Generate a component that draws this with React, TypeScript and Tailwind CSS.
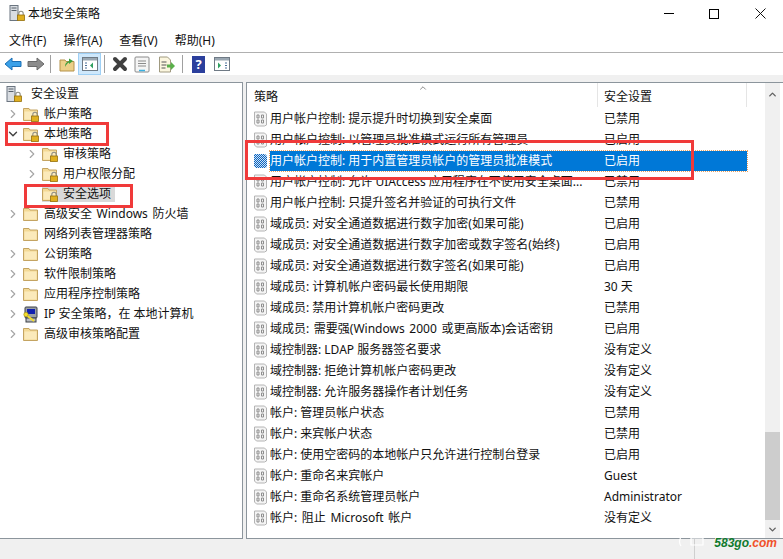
import { ChevronRight, ChevronDown, ChevronUp } from 'lucide-react'

const font = { fontFamily: '"Noto Sans", "Noto Sans CJK SC", sans-serif' }

interface Policy {
  name: string
  value: string
}

const policies: Policy[] = [
  { name: '用户帐户控制: 提示提升时切换到安全桌面', value: '已禁用' },
  { name: '用户帐户控制: 以管理员批准模式运行所有管理员', value: '已启用' },
  { name: '用户帐户控制: 用于内置管理员帐户的管理员批准模式', value: '已启用' },
  { name: '用户帐户控制: 允许 UIAccess 应用程序在不使用安全桌面...', value: '已禁用' },
  { name: '用户帐户控制: 只提升签名并验证的可执行文件', value: '已禁用' },
  { name: '域成员: 对安全通道数据进行数字加密(如果可能)', value: '已启用' },
  { name: '域成员: 对安全通道数据进行数字加密或数字签名(始终)', value: '已启用' },
  { name: '域成员: 对安全通道数据进行数字签名(如果可能)', value: '已启用' },
  { name: '域成员: 计算机帐户密码最长使用期限', value: '30 天' },
  { name: '域成员: 禁用计算机帐户密码更改', value: '已禁用' },
  { name: '域成员: 需要强(Windows 2000 或更高版本)会话密钥', value: '已启用' },
  { name: '域控制器: LDAP 服务器签名要求', value: '没有定义' },
  { name: '域控制器: 拒绝计算机帐户密码更改', value: '没有定义' },
  { name: '域控制器: 允许服务器操作者计划任务', value: '没有定义' },
  { name: '帐户: 管理员帐户状态', value: '已禁用' },
  { name: '帐户: 来宾帐户状态', value: '已禁用' },
  { name: '帐户: 使用空密码的本地帐户只允许进行控制台登录', value: '已启用' },
  { name: '帐户: 重命名来宾帐户', value: 'Guest' },
  { name: '帐户: 重命名系统管理员帐户', value: 'Administrator' },
  { name: '帐户: 阻止 Microsoft 帐户', value: '没有定义' },
]

// Windows / Microsoft lines run a bit wider in the screenshot
const isWide = (s: string) => /Windows|Microsoft/.test(s)

function Lock() {
  return (
    <g>
      <path d="M9.800 10V8.500a2.200 2.200 0 0 1 4.400 0V10" fill="none" stroke="#8f8f85" strokeWidth="1.100" />
      <rect x="8.500" y="10" width="7" height="5.500" fill="#e0b020" stroke="#96700c" strokeWidth="0.800" />
    </g>
  )
}

function Folder({ lock }: { lock?: boolean }) {
  return (
    <svg width="16" height="16" viewBox="0 0 16 16" className="shrink-0">
      <path d="M0.500 2.500h5.500l1 1.500h7.500v10.500h-14z" fill="#f3d996" stroke="#c4a462" />
      <path d="M1.500 5.500h12v8h-12z" fill="#fbeabb" />
      {lock && <Lock />}
    </svg>
  )
}

function ServerLock() {
  return (
    <svg width="16" height="17" viewBox="0 0 16 17" className="shrink-0">
      <rect x="1" y="0.500" width="8" height="15" fill="#d9dde2" stroke="#6b7580" />
      <path d="M2.500 3h5M2.500 5.500h5" stroke="#56606a" />
      <Lock />
    </svg>
  )
}

function IpIcon() {
  return (
    <svg width="16" height="17" viewBox="0 0 16 17" className="shrink-0">
      <rect x="2" y="1" width="12" height="11" rx="1" fill="#9aa0a6" stroke="#3c4046" />
      <rect x="4" y="3" width="8" height="5" fill="#1020b0" />
      <rect x="3" y="12" width="10" height="4" fill="#b7bbc0" stroke="#3c4046" />
      <path d="M2 8l9 7" stroke="#f2dc2e" strokeWidth="2" />
      <circle cx="3" cy="8.500" r="2.200" fill="#f2dc2e" stroke="#a08c10" strokeWidth="0.600" />
    </svg>
  )
}

function PolicyIcon({ selected }: { selected?: boolean }) {
  if (selected) {
    return (
      <svg width="13" height="16" viewBox="0 0 13 16" className="shrink-0">
        <defs>
          <pattern id="dither" width="2" height="2" patternUnits="userSpaceOnUse">
            <rect width="2" height="2" fill="#cfe2f5" />
            <rect width="1" height="1" fill="#0a64c0" />
            <rect x="1" y="1" width="1" height="1" fill="#0a64c0" />
          </pattern>
        </defs>
        <path d="M0 1h11l2 2v11l-2 1H2l-2-2z" fill="url(#dither)" />
      </svg>
    )
  }
  return (
    <svg width="13" height="16" viewBox="0 0 13 16" className="shrink-0">
      <path d="M0.500 1h10l2 2v11l-2 1h-8l-2-2z" fill="#f4f4f4" stroke="#b4b4b4" />
      <path d="M3 4h2v3H3zM7.500 4h2v3h-2zM3 9h2v3H3zM7.500 9h2v3h-2z" fill="none" stroke="#8e8e8e" />
    </svg>
  )
}

function TreeRow({ label, level = 0, arrow, icon, selected }: { label: string; level?: 0 | 1; arrow?: 'right' | 'down'; icon: React.ReactNode; selected?: boolean }) {
  return (
    <div className={`flex h-5 items-center ${level === 1 ? 'pl-[25px]' : 'pl-[6px]'}`}>
      <span className="flex w-[17px] shrink-0 items-center justify-start">
        {arrow === 'right' && <ChevronRight size={14} strokeWidth={2} className="text-[#a6a6a6]" />}
        {arrow === 'down' && <ChevronDown size={14} strokeWidth={2.4} className="text-[#404040]" />}
      </span>
      <span className={`flex h-[16px] items-center ${selected ? 'bg-[#d9d9d9] pr-[4px]' : ''}`}>
        {icon}
        <span className={`ml-[5px] whitespace-nowrap ${isWide(label) ? '[word-spacing:1.500px]' : ''}`}>{label}</span>
      </span>
    </div>
  )
}

function Toolbar() {
  return (
    <div className="flex h-[23px] items-center border-t border-[#b0b0b0] bg-white pl-1">
      <svg width="18" height="16" viewBox="0 0 18 16">
        <path d="M1 8l7-6v3.500h9v5H8V14z" fill="#3aa0e8" stroke="#1a6fb5" />
      </svg>
      <svg width="18" height="16" viewBox="0 0 18 16" className="ml-[5px]">
        <path d="M17 8l-7-6v3.500H1v5h9V14z" fill="#8c8c8c" stroke="#6a6a6a" />
      </svg>
      <div className="ml-[5px] h-[18px] w-px bg-[#a0a0a0]" />
      <svg width="16" height="16" viewBox="0 0 16 16" className="ml-[8px]">
        <path d="M1 4h5l1 1.500h8V15H1z" fill="#ecd089" stroke="#b5924a" />
        <path d="M6 11c0-4 2-5 4-6V2.500L14 5l-4 3V6.500C8 7.500 7 9 6 11z" fill="#3e9f3e" />
      </svg>
      <div className="ml-[3px] flex h-[22px] w-[23px] items-center justify-center border border-[#9fd0f5] bg-[#cfe8fb]">
        <svg width="16" height="14" viewBox="0 0 16 14">
          <rect x="0.500" y="0.500" width="15" height="13" fill="#fff" stroke="#6f7a85" />
          <rect x="1" y="1" width="14" height="2.500" fill="#9aa7b2" />
          <path d="M3 6h2M3 8.500h2M3 11h2" stroke="#4a6f98" />
          <path d="M11 5.500v6L8 8.500z" fill="#2ea060" />
        </svg>
      </div>
      <div className="ml-[3px] h-[18px] w-px bg-[#a0a0a0]" />
      <svg width="16" height="16" viewBox="0 0 16 16" className="ml-[7px]">
        <path d="M3 3l10 10M13 3L3 13" stroke="#3f3f3f" strokeWidth="4" strokeLinecap="round" />
      </svg>
      <svg width="16" height="17" viewBox="0 0 16 17" className="ml-[6px]">
        <rect x="1" y="1" width="14" height="15" rx="1" fill="#f5f5f5" stroke="#8a8a8a" />
        <path d="M4 5h8M4 7.500h8M4 10h8" stroke="#8a8a8a" />
        <path d="M5 14.500h6" stroke="#3ab0e0" strokeWidth="1.500" />
      </svg>
      <svg width="18" height="17" viewBox="0 0 18 17" className="ml-[8px]">
        <path d="M1.500 1h8l3 3v12h-11z" fill="#fbf6df" stroke="#a09a80" />
        <path d="M3.500 6h5M3.500 9h5M3.500 12h4" stroke="#555" />
        <path d="M9 8.500h4V6l4 4-4 4v-2.500H9z" fill="#5ab04a" />
      </svg>
      <div className="ml-[6px] h-[18px] w-px bg-[#a0a0a0]" />
      <div className="ml-[9px] flex h-[17px] w-[13px] items-center justify-center bg-[#2b3f9c] text-[13px] font-bold leading-none text-white">?</div>
      <svg width="16" height="14" viewBox="0 0 16 14" className="ml-[9px]">
        <rect x="0.500" y="0.500" width="15" height="13" fill="#fff" stroke="#6f7a85" />
        <rect x="1" y="1" width="14" height="2.500" fill="#9aa7b2" />
        <path d="M11 6h2M11 8.500h2M11 11h2" stroke="#4a6f98" />
        <path d="M4 5.500v6L7 8.500z" fill="#2ea060" />
      </svg>
    </div>
  )
}

export default function App() {
  const folderLock = <Folder lock />
  const folder = <Folder />

  return (
    <div className="relative flex h-[559px] w-[783px] flex-col overflow-hidden bg-white text-[12px] text-[#111]" style={font}>
      <div className="flex h-[27px] items-center pl-[9px]">
        <ServerLock />
        <span className="ml-[3px]">本地安全策略</span>
        <div className="ml-auto flex items-center">
          <div className="mr-[35px] h-px w-[10px] bg-black" />
          <div className="mr-[36px] h-[10px] w-[10px] border border-black" />
          <svg width="11" height="11" viewBox="0 0 11 11" className="mr-[17px]">
            <path d="M0.500 0.500l10 10M10.500 0.500l-10 10" stroke="#111" />
          </svg>
        </div>
      </div>
      <div className="flex h-[25px] items-center gap-[17px] pl-[9px] pt-[2px]">
        <span>文件(F)</span>
        <span>操作(A)</span>
        <span>查看(V)</span>
        <span>帮助(H)</span>
      </div>
      <Toolbar />
      <div className="flex min-h-0 flex-1 flex-col bg-[#f0f0f0] pt-[7px]">
        <div className="flex h-[457px] gap-[3px]">
          <div className="w-[243px] shrink-0 border-y border-r border-[#8c959c] bg-white pt-[1px]">
            <div className="flex h-5 items-center pl-[6px]">
              <ServerLock />
              <span className="ml-[9px]">安全设置</span>
            </div>
            <TreeRow label="帐户策略" arrow="right" icon={folderLock} />
            <TreeRow label="本地策略" arrow="down" icon={folderLock} />
            <TreeRow label="审核策略" level={1} arrow="right" icon={folderLock} />
            <TreeRow label="用户权限分配" level={1} arrow="right" icon={folderLock} />
            <TreeRow label="安全选项" level={1} icon={folderLock} selected />
            <TreeRow label="高级安全 Windows 防火墙" arrow="right" icon={folder} />
            <TreeRow label="网络列表管理器策略" icon={folder} />
            <TreeRow label="公钥策略" arrow="right" icon={folder} />
            <TreeRow label="软件限制策略" arrow="right" icon={folder} />
            <TreeRow label="应用程序控制策略" arrow="right" icon={folder} />
            <TreeRow label="IP 安全策略，在 本地计算机" arrow="right" icon={<IpIcon />} />
            <TreeRow label="高级审核策略配置" arrow="right" icon={folder} />
          </div>
          <div className="flex min-w-0 flex-1 border-y border-l border-[#8c959c] bg-white">
            <div className="min-w-0 flex-1 pl-[6px]">
              <div className="relative mb-[1px] flex h-[24px]">
                <div className="flex w-[345px] items-center border-r border-[#e5e5e5] pl-[1px] pt-[3px]">策略</div>
                <div className="flex w-[149px] items-center border-r border-[#e5e5e5] pl-[6px] pt-[3px]">安全设置</div>
                <ChevronUp size={10} className="absolute left-[165px] top-0 text-[#777]" />
              </div>
              {policies.map((p, i) => {
                const selected = i === 2
                return (
                  <div key={p.name} className="flex h-[21px] items-center">
                    <div className="flex w-[17px] shrink-0 items-center pl-px">
                      <PolicyIcon selected={selected} />
                    </div>
                    <div className={`flex h-[20px] w-[477px] items-center whitespace-nowrap ${selected ? 'bg-[#0078d7] text-white outline-1 outline-dotted outline-[#e8a060]' : ''}`}>
                      <span className={`w-[334px] shrink-0 ${isWide(p.name) ? '[word-spacing:1.500px]' : ''}`}>{p.name}</span>
                      <span>{p.value}</span>
                    </div>
                  </div>
                )
              })}
            </div>
            <div className="mr-[3px] flex w-[15px] shrink-0 flex-col bg-[#f0f0f0]">
              <div className="flex h-[17px] items-center justify-center pt-[6px]">
                <ChevronUp size={11} strokeWidth={3} className="text-[#606060]" />
              </div>
              <div className="mt-[332px] h-[88px] bg-[#cdcdcd]" />
              <div className="mt-auto flex h-[17px] items-center justify-center">
                <ChevronDown size={11} strokeWidth={3} className="text-[#606060]" />
              </div>
            </div>
          </div>
        </div>
        <div className="flex flex-1">
          <div className="w-[695px] border-r border-[#cfcfcf]" />
        </div>
      </div>

      <div className="absolute left-[5px] top-[122px] h-[24px] w-[104px] border-[3px] border-[#f03a3a]" />
      <div className="absolute left-[24px] top-[184px] h-[24px] w-[109px] border-[3px] border-[#f03a3a]" />
      <div className="absolute left-[245px] top-[140px] h-[40px] w-[449px] border-[3px] border-[#f03a3a]" />
      <svg width="40" height="12" viewBox="0 0 40 12" className="absolute left-[678px] top-[536px]">
        <path d="M3 1c-2 3-2 6 0 9M37 1c2 3 2 6 0 9M13 2h12v7H13z" fill="none" stroke="#fff" strokeWidth="1.200" />
      </svg>
      <div className="absolute right-[6px] top-[534px] text-[12px] font-bold italic leading-[18px]" style={{ fontFamily: '"Liberation Sans", sans-serif' }}>
        <span className="text-[#0f7a2e]">583go</span>
        <span className="text-[#f0502a]">.com</span>
      </div>
    </div>
  )
}
